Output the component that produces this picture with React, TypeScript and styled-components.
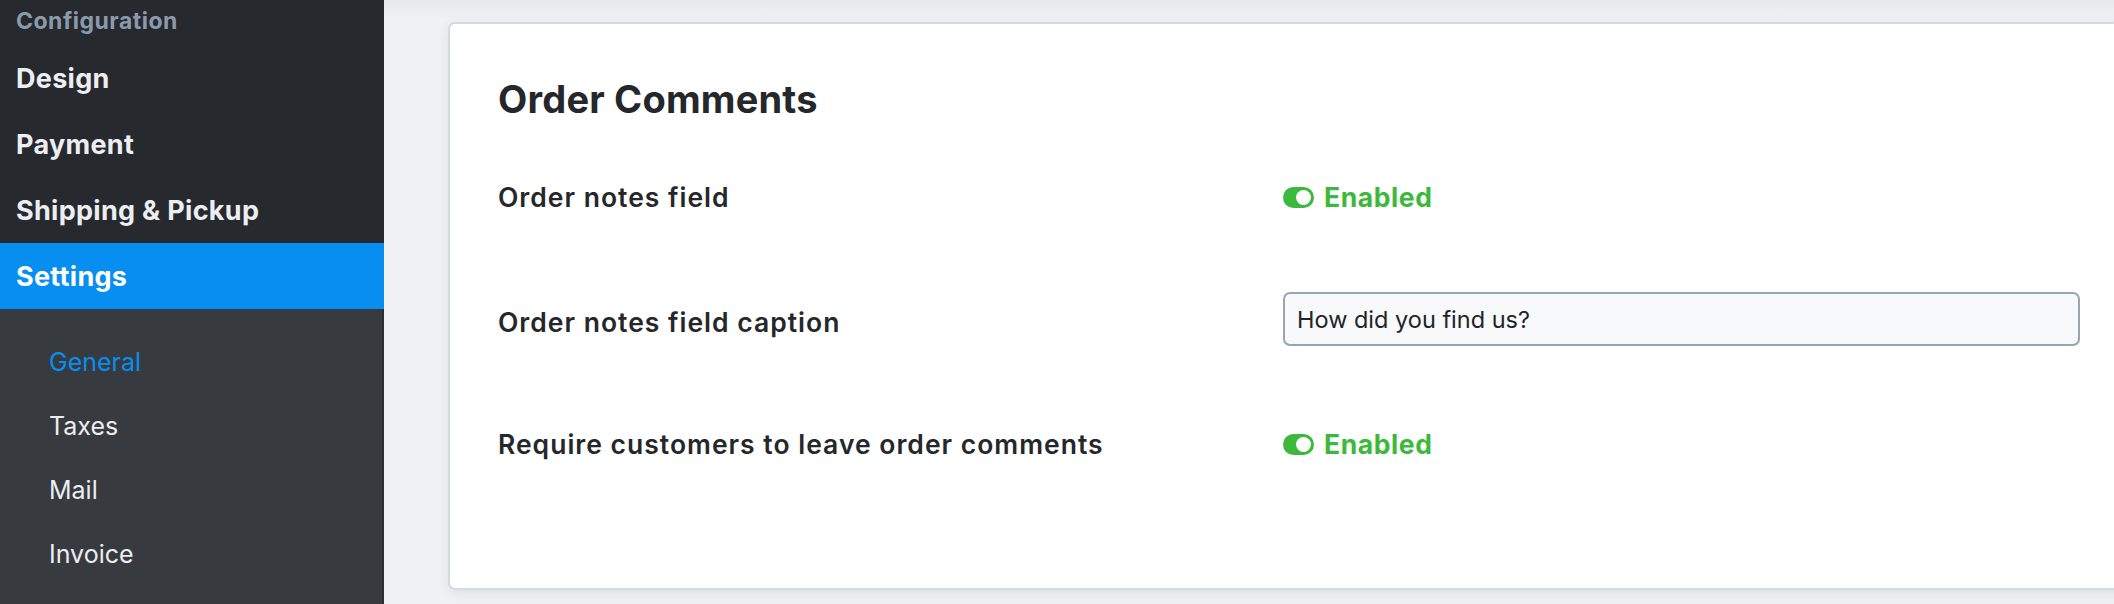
import React from 'react';
import styled, { createGlobalStyle } from 'styled-components';

const GlobalStyle = createGlobalStyle`
  html, body {
    margin: 0;
    padding: 0;
    height: 100%;
    overflow: hidden;
  }
  body {
    font-family: Inter, "Noto Sans", "Liberation Sans", sans-serif;
    background: #f0f1f3;
    -webkit-font-smoothing: antialiased;
  }
  #root {
    height: 100%;
  }
`;

const Layout = styled.div`
  display: flex;
  height: 604px;
  width: 100%;
`;

const Sidebar = styled.aside`
  width: 384px;
  flex-shrink: 0;
  display: flex;
  flex-direction: column;
  background: #26292e;
`;

const SectionTitle = styled.div`
  height: 45px;
  box-sizing: border-box;
  display: flex;
  align-items: center;
  padding: 0 16px 4px;
  color: #8b9aab;
  font-size: 23px;
  font-weight: 700;
  letter-spacing: 0.5px;
`;

const MainItem = styled.div<{ $active?: boolean }>`
  height: 66px;
  display: flex;
  align-items: center;
  padding: 0 16px;
  font-size: 27px;
  font-weight: 700;
  letter-spacing: 0.3px;
  color: ${(p) => (p.$active ? '#ffffff' : '#eceef1')};
  background: ${(p) => (p.$active ? '#078ef0' : 'transparent')};
`;

const SubNav = styled.div`
  flex: 1;
  background: #373b40;
  border-right: 2px solid #2b2e33;
  padding-top: 21px;
`;

const SubItem = styled.div<{ $active?: boolean }>`
  height: 64px;
  display: flex;
  align-items: center;
  padding-left: 49px;
  font-size: 25px;
  font-weight: 400;
  color: ${(p) => (p.$active ? '#078ef0' : '#eceef1')};
`;

const Main = styled.main`
  flex: 1;
  overflow: hidden;
  padding: 22px 0 0 64px;
  background: linear-gradient(to bottom, #e8e9eb 0px, #f0f1f3 20px);
`;

const Card = styled.section`
  margin-right: -60px;
  height: 568px;
  box-sizing: border-box;
  background: #ffffff;
  border: 2px solid #d3dae2;
  border-radius: 7px;
  box-shadow: 0 3px 12px rgba(30, 40, 60, 0.08);
  padding: 52px 50px 0 48px;
`;

const Title = styled.h2`
  margin: 0 0 48px;
  height: 46px;
  line-height: 46px;
  font-size: 38px;
  font-weight: 700;
  letter-spacing: 0.2px;
  color: #25272b;
`;

const Rows = styled.div`
  display: flex;
  flex-direction: column;
`;

const Row = styled.div<{ $gap?: number }>`
  display: grid;
  grid-template-columns: 785px 797px;
  align-items: center;
  height: 54px;
  margin-bottom: ${(p) => p.$gap ?? 0}px;
`;

const Label = styled.div<{ $shift?: number }>`
  font-size: 26.5px;
  font-weight: 600;
  letter-spacing: 1px;
  color: #25272b;
  transform: translateY(${(p) => p.$shift ?? 0}px);
`;

const Status = styled.div`
  display: flex;
  align-items: center;
  gap: 10px;
  color: #3cb93c;
  font-size: 26.5px;
  font-weight: 700;
  letter-spacing: 0.6px;
`;

const ToggleIcon = styled.span`
  width: 31px;
  height: 21px;
  border-radius: 11px;
  background: #3cb93c;
  position: relative;
  &::after {
    content: '';
    position: absolute;
    right: 3px;
    top: 3px;
    width: 15px;
    height: 15px;
    border-radius: 50%;
    background: #ffffff;
  }
`;

const TextInput = styled.input`
  box-sizing: border-box;
  width: 797px;
  height: 54px;
  padding: 0 12px;
  border: 2px solid #97a6b4;
  border-radius: 7px;
  background: #f8f9fa;
  font-family: inherit;
  font-size: 23.5px;
  color: #222428;
  outline: none;
`;

const Enabled = () => (
  <Status>
    <ToggleIcon />
    Enabled
  </Status>
);

const App = () => {
  return (
    <>
      <GlobalStyle />
      <Layout>
        <Sidebar>
          <SectionTitle>Configuration</SectionTitle>
          <MainItem>Design</MainItem>
          <MainItem>Payment</MainItem>
          <MainItem>Shipping &amp; Pickup</MainItem>
          <MainItem $active>Settings</MainItem>
          <SubNav>
            <SubItem $active>General</SubItem>
            <SubItem>Taxes</SubItem>
            <SubItem>Mail</SubItem>
            <SubItem>Invoice</SubItem>
          </SubNav>
        </Sidebar>
        <Main>
          <Card>
            <Title>Order Comments</Title>
            <Rows>
              <Row $gap={68}>
                <Label>Order notes field</Label>
                <Enabled />
              </Row>
              <Row $gap={71}>
                <Label $shift={3}>Order notes field caption</Label>
                <TextInput defaultValue="How did you find us?" />
              </Row>
              <Row>
                <Label>Require customers to leave order comments</Label>
                <Enabled />
              </Row>
            </Rows>
          </Card>
        </Main>
      </Layout>
    </>
  );
};

export default App;
